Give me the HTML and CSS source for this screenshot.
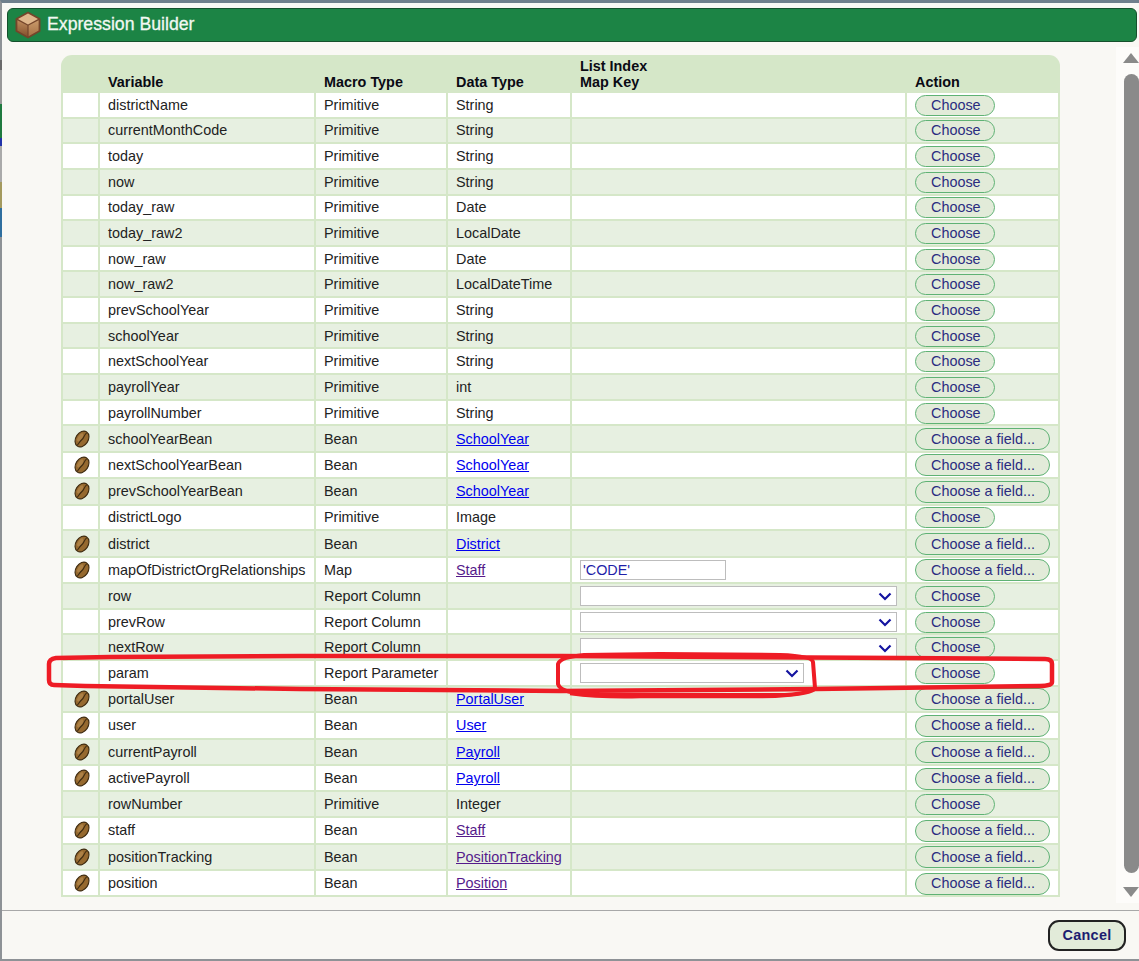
FILE: index.html
```html
<!DOCTYPE html>
<html lang="en">
<head>
<meta charset="utf-8">
<title>Expression Builder</title>
<link rel="stylesheet" href="styles.css">
</head>
<body>
<svg class="defs" width="0" height="0" aria-hidden="true">
  <symbol id="bean" viewBox="0 0 18 18">
    <ellipse cx="9" cy="9" rx="6.2" ry="8.5" transform="rotate(33 9 9)" fill="#96692f" stroke="#3f2c12" stroke-width="1.1"/>
    <ellipse cx="7.2" cy="7.4" rx="2" ry="4.6" transform="rotate(33 7.2 7.4)" fill="#ad8146"/>
    <path d="M13.8 2.6C11 5 11.2 7.5 9 9.5S6 13 4.2 15.4" fill="none" stroke="#3f2c12" stroke-width="1.1"/>
  </symbol>
  <symbol id="chev" viewBox="0 0 14 9">
    <path d="M1.5 1.5L7 7l5.5-5.5" fill="none" stroke="#1414a0" stroke-width="2.2"/>
  </symbol>
</svg>
<div class="dialog">
  <header class="title">
    <svg class="box" viewBox="0 0 26 28" aria-hidden="true">
      <defs>
        <linearGradient id="lf" x1="0" y1="0" x2="0" y2="1"><stop offset="0" stop-color="#bd8a5c"/><stop offset="1" stop-color="#86522e"/></linearGradient>
        <linearGradient id="rf" x1="0" y1="0" x2="0" y2="1"><stop offset="0" stop-color="#c8996a"/><stop offset="1" stop-color="#a87346"/></linearGradient>
      </defs>
      <path d="M13 0.5L25.5 7.5V20.5L13 27.5L0.5 20.5V7.5Z" fill="#74452a"/>
      <path d="M13 2.6L23 8L13 13.4L3 8Z" fill="#dfb78c"/>
      <path d="M2.4 9.3L12.4 14.6V25.2L2.4 19.6Z" fill="url(#lf)"/>
      <path d="M23.6 9.3L13.6 14.6V25.2L23.6 19.6Z" fill="url(#rf)"/>
    </svg>
    <h1 class="title-text">Expression Builder</h1>
  </header>
  <div class="body">
    <main class="pane">
      <table class="vars">
        <colgroup><col class="c-icon"><col class="c-var"><col class="c-macro"><col class="c-data"><col class="c-key"><col class="c-act"></colgroup>
        <thead>
          <tr><th></th><th>Variable</th><th>Macro Type</th><th>Data Type</th><th>List Index<br>Map Key</th><th>Action</th></tr>
        </thead>
        <tbody>
          <tr><td></td><td>districtName</td><td>Primitive</td><td>String</td><td></td><td><button class="btn">Choose</button></td></tr>
          <tr><td></td><td>currentMonthCode</td><td>Primitive</td><td>String</td><td></td><td><button class="btn">Choose</button></td></tr>
          <tr><td></td><td>today</td><td>Primitive</td><td>String</td><td></td><td><button class="btn">Choose</button></td></tr>
          <tr><td></td><td>now</td><td>Primitive</td><td>String</td><td></td><td><button class="btn">Choose</button></td></tr>
          <tr><td></td><td>today_raw</td><td>Primitive</td><td>Date</td><td></td><td><button class="btn">Choose</button></td></tr>
          <tr><td></td><td>today_raw2</td><td>Primitive</td><td>LocalDate</td><td></td><td><button class="btn">Choose</button></td></tr>
          <tr><td></td><td>now_raw</td><td>Primitive</td><td>Date</td><td></td><td><button class="btn">Choose</button></td></tr>
          <tr><td></td><td>now_raw2</td><td>Primitive</td><td>LocalDateTime</td><td></td><td><button class="btn">Choose</button></td></tr>
          <tr><td></td><td>prevSchoolYear</td><td>Primitive</td><td>String</td><td></td><td><button class="btn">Choose</button></td></tr>
          <tr><td></td><td>schoolYear</td><td>Primitive</td><td>String</td><td></td><td><button class="btn">Choose</button></td></tr>
          <tr><td></td><td>nextSchoolYear</td><td>Primitive</td><td>String</td><td></td><td><button class="btn">Choose</button></td></tr>
          <tr><td></td><td>payrollYear</td><td>Primitive</td><td>int</td><td></td><td><button class="btn">Choose</button></td></tr>
          <tr><td></td><td>payrollNumber</td><td>Primitive</td><td>String</td><td></td><td><button class="btn">Choose</button></td></tr>
          <tr class="tall"><td class="ic"><svg class="bean"><use href="#bean"/></svg></td><td>schoolYearBean</td><td>Bean</td><td><a class="lk" href="#">SchoolYear</a></td><td></td><td><button class="btn">Choose a field...</button></td></tr>
          <tr class="tall"><td class="ic"><svg class="bean"><use href="#bean"/></svg></td><td>nextSchoolYearBean</td><td>Bean</td><td><a class="lk" href="#">SchoolYear</a></td><td></td><td><button class="btn">Choose a field...</button></td></tr>
          <tr class="tall"><td class="ic"><svg class="bean"><use href="#bean"/></svg></td><td>prevSchoolYearBean</td><td>Bean</td><td><a class="lk" href="#">SchoolYear</a></td><td></td><td><button class="btn">Choose a field...</button></td></tr>
          <tr><td></td><td>districtLogo</td><td>Primitive</td><td>Image</td><td></td><td><button class="btn">Choose</button></td></tr>
          <tr class="tall"><td class="ic"><svg class="bean"><use href="#bean"/></svg></td><td>district</td><td>Bean</td><td><a class="lk" href="#">District</a></td><td></td><td><button class="btn">Choose a field...</button></td></tr>
          <tr class="tall"><td class="ic"><svg class="bean"><use href="#bean"/></svg></td><td>mapOfDistrictOrgRelationships</td><td>Map</td><td><a class="lk seen" href="#">Staff</a></td><td><input class="key" type="text" value="'CODE'"></td><td><button class="btn">Choose a field...</button></td></tr>
          <tr><td></td><td>row</td><td>Report Column</td><td></td><td><span class="sel wide"><select class="sel-in"><option></option></select><svg class="chev"><use href="#chev"/></svg></span></td><td><button class="btn">Choose</button></td></tr>
          <tr><td></td><td>prevRow</td><td>Report Column</td><td></td><td><span class="sel wide"><select class="sel-in"><option></option></select><svg class="chev"><use href="#chev"/></svg></span></td><td><button class="btn">Choose</button></td></tr>
          <tr><td></td><td>nextRow</td><td>Report Column</td><td></td><td><span class="sel wide"><select class="sel-in"><option></option></select><svg class="chev"><use href="#chev"/></svg></span></td><td><button class="btn">Choose</button></td></tr>
          <tr><td></td><td>param</td><td>Report Parameter</td><td></td><td><span class="sel narrow"><select class="sel-in"><option></option></select><svg class="chev"><use href="#chev"/></svg></span></td><td><button class="btn">Choose</button></td></tr>
          <tr class="tall"><td class="ic"><svg class="bean"><use href="#bean"/></svg></td><td>portalUser</td><td>Bean</td><td><a class="lk" href="#">PortalUser</a></td><td></td><td><button class="btn">Choose a field...</button></td></tr>
          <tr class="tall"><td class="ic"><svg class="bean"><use href="#bean"/></svg></td><td>user</td><td>Bean</td><td><a class="lk" href="#">User</a></td><td></td><td><button class="btn">Choose a field...</button></td></tr>
          <tr class="tall"><td class="ic"><svg class="bean"><use href="#bean"/></svg></td><td>currentPayroll</td><td>Bean</td><td><a class="lk" href="#">Payroll</a></td><td></td><td><button class="btn">Choose a field...</button></td></tr>
          <tr class="tall"><td class="ic"><svg class="bean"><use href="#bean"/></svg></td><td>activePayroll</td><td>Bean</td><td><a class="lk" href="#">Payroll</a></td><td></td><td><button class="btn">Choose a field...</button></td></tr>
          <tr><td></td><td>rowNumber</td><td>Primitive</td><td>Integer</td><td></td><td><button class="btn">Choose</button></td></tr>
          <tr class="tall"><td class="ic"><svg class="bean"><use href="#bean"/></svg></td><td>staff</td><td>Bean</td><td><a class="lk seen" href="#">Staff</a></td><td></td><td><button class="btn">Choose a field...</button></td></tr>
          <tr class="tall"><td class="ic"><svg class="bean"><use href="#bean"/></svg></td><td>positionTracking</td><td>Bean</td><td><a class="lk seen" href="#">PositionTracking</a></td><td></td><td><button class="btn">Choose a field...</button></td></tr>
          <tr class="tall"><td class="ic"><svg class="bean"><use href="#bean"/></svg></td><td>position</td><td>Bean</td><td><a class="lk seen" href="#">Position</a></td><td></td><td><button class="btn">Choose a field...</button></td></tr>
        </tbody>
      </table>
    </main>
    <aside class="scroll" aria-hidden="true">
      <span class="arrow up"></span>
      <span class="thumb"></span>
      <span class="arrow down"></span>
    </aside>
  </div>
  <footer class="foot"><button class="cancel">Cancel</button></footer>
</div>
<svg class="ink" viewBox="0 0 1139 961" aria-hidden="true">
  <path d="M1045 659Q1052 659 1052 664L1052 682Q1052 686 1040 686L815 689L560 691L300 689L85 686L54 685Q49 685 49 680L49 664Q49 659 56 658L110 657L300 656L560 656L900 658Z" fill="none" stroke="#ee1c25" stroke-width="4.5" stroke-linejoin="round"/>
  <path d="M584 655L660 654L780 655Q812 656 813 662L815 688Q815 693 785 695L600 695Q560 694 558 684L558 664Q560 657 584 655Z" fill="none" stroke="#ee1c25" stroke-width="4" stroke-linejoin="round"/>
  <path d="M570 694Q600 698 640 697L760 697Q790 697 806 692" fill="none" stroke="#ee1c25" stroke-width="2.5"/>
</svg>
</body>
</html>
```

FILE: styles.css
```css
* { box-sizing: border-box; }
html, body { margin: 0; height: 100%; overflow: hidden; }
body { background: #f9f8f4; font-family: "Liberation Sans", Arial, sans-serif; font-size: 14.4px; color: #222; position: relative; }
.defs { position: absolute; }

.dialog {
  height: 961px;
  display: flex;
  flex-direction: column;
  border-top: 3px solid #6f7f8c;
  border-left: 2px solid #8e9296;
  background: #f9f8f4;
}
.dialog::before {
  content: "";
  position: absolute;
  left: 0; top: 60px;
  width: 2px; height: 180px;
  background: linear-gradient(#6a6a6a 0 10px, #999 10px 44px, #1f7a3f 44px 78px, #2233aa 78px 86px, #aaa 86px 122px, #a49a5e 122px 148px, #2f6f9f 148px 177px, #8e9296 177px);
}

.title {
  margin: 5px 2px 0 5px;
  height: 34px;
  display: flex;
  align-items: center;
  gap: 6px;
  padding-left: 7px;
  background: #1c8445;
  border: 1px solid #15502c;
  border-radius: 6px;
}
.box { width: 26px; height: 28px; flex: none; }
.title-text { margin: 0 0 2px; font-size: 17.7px; font-weight: 400; color: #f2f8f2; -webkit-text-stroke: 0.3px #f2f8f2; }

.body { flex: 1; min-height: 0; display: flex; justify-content: space-between; align-items: flex-start; }
.pane { padding: 13px 0 0 59px; }

.vars {
  width: 999px;
  table-layout: fixed;
  border-collapse: separate;
  border-spacing: 0;
  background: #d5e7c8;
  border-radius: 11px 11px 0 0;
  line-height: 16px;
}
.c-icon { width: 37px; }
.c-var { width: 216px; }
.c-macro { width: 132px; }
.c-data { width: 124px; }
.c-key { width: 335px; }
.c-act { width: 155px; }

.vars th {
  height: 38px;
  padding: 0 0 3px 10px;
  text-align: left;
  vertical-align: bottom;
  font-weight: 700;
  color: #0a0a14;
}
.vars tbody tr { height: 25.65px; }
.vars tbody tr.tall { height: 26.45px; }
.vars td {
  padding: 0 0 0 8px;
  background: #fff;
  border-left: 2px solid #d5e7c8;
  border-bottom: 2px solid #d5e7c8;
  vertical-align: middle;
  white-space: nowrap;
}
.vars td:last-child { border-right: 2px solid #d5e7c8; }
.vars tbody tr:nth-child(even) td { background: #e7f0e1; }
.vars td.ic { padding: 0 0 0 3px; text-align: center; }

.bean { width: 18px; height: 18px; display: block; margin: 0 auto; }

.lk { color: #0000ee; }
.lk.seen { color: #551a8b; }

.btn {
  display: block;
  height: 21px;
  margin-top: 1px;
  padding: 0 13.5px 0 15px;
  font: 14.4px/17px "Liberation Sans", Arial, sans-serif;
  color: #2b2b80;
  background: #e2ebd9;
  border: 1px solid #5fb274;
  border-radius: 11px;
}
.tall .btn { height: 22px; }

.key {
  display: block;
  width: 146px;
  height: 20px;
  margin-top: 1px;
  padding: 0 2px;
  font: 14.4px "Liberation Sans", Arial, sans-serif;
  color: #1f1fa8;
  border: 1px solid #bdbdbd;
  background: #fff;
}
.sel { display: block; position: relative; height: 20px; margin-top: 1px; }
.sel.wide { width: 317px; }
.sel.narrow { width: 224px; }
.sel-in {
  display: block;
  width: 100%;
  height: 100%;
  appearance: none;
  -webkit-appearance: none;
  border: 1px solid #bdbdbd;
  border-radius: 0;
  background: #fff;
}
.chev { position: absolute; right: 5px; top: 6px; width: 14px; height: 9px; pointer-events: none; }

.scroll {
  width: 23px;
  height: 856px;
  margin-top: 5px;
  background: #fdfcfa;
  display: flex;
  flex-direction: column;
  align-items: flex-end;
}
.arrow { width: 0; height: 0; border-left: 8px solid transparent; border-right: 8px solid transparent; }
.arrow.up { margin-top: 6px; border-bottom: 10px solid #8a8a8a; }
.arrow.down { margin-top: 14px; border-top: 10px solid #8a8a8a; }
.thumb { width: 15px; height: 799px; margin-top: 11px; border-radius: 8px; background: #8a8a8a; }

.foot {
  height: 51px;
  display: flex;
  align-items: center;
  justify-content: flex-end;
  padding: 0 13px 0 0;
  border-top: 1px solid #a8a8a8;
  border-bottom: 2px solid #8e9296;
}
.cancel {
  width: 78px;
  height: 31px;
  padding: 0;
  font: 700 14.4px "Liberation Sans", Arial, sans-serif;
  letter-spacing: 0.3px;
  color: #1c1c70;
  background: #e2ebd9;
  border: 2px solid #222;
  border-radius: 11px;
}

.ink { position: absolute; left: 0; top: 0; width: 1139px; height: 961px; pointer-events: none; }
```
